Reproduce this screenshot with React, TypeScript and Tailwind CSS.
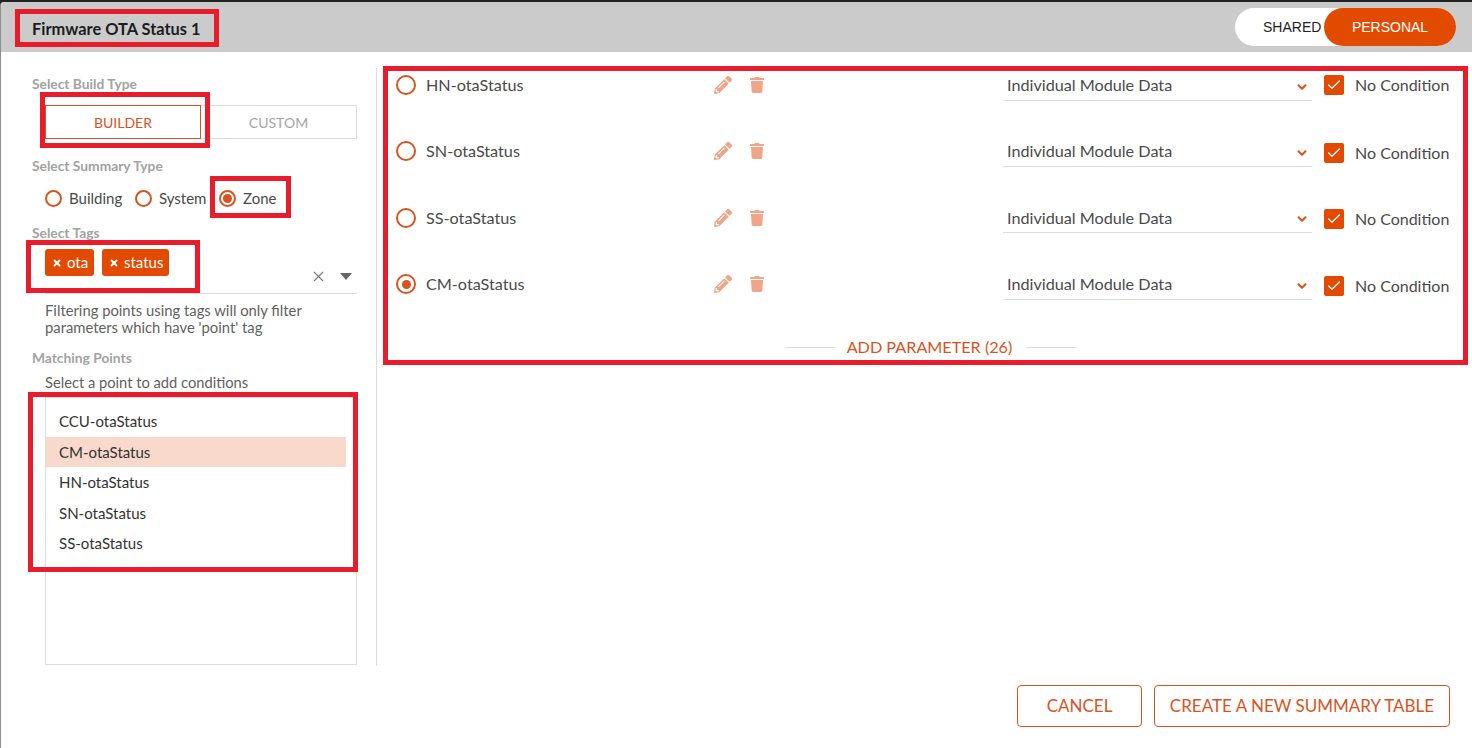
import { FaPencilAlt, FaTrash } from "react-icons/fa";
import { ChevronDown, Check, X } from "lucide-react";

const rows = [
  { name: "HN-otaStatus", checked: false, condClass: "mt-0" },
  { name: "SN-otaStatus", checked: false, condClass: "mt-[4px]" },
  { name: "SS-otaStatus", checked: false, condClass: "mt-[2px]" },
  { name: "CM-otaStatus", checked: true, condClass: "mt-[3px]" },
];

const points = ["CCU-otaStatus", "CM-otaStatus", "HN-otaStatus", "SN-otaStatus", "SS-otaStatus"];

// red annotation boxes that sit over the screenshot
const marks = [
  "left-[15px] top-[9px] w-[204px] h-[38px]",
  "left-[40px] top-[92px] w-[170px] h-[56px]",
  "left-[210px] top-[176px] w-[81px] h-[42px]",
  "left-[26px] top-[240px] w-[174px] h-[53px]",
  "left-[28px] top-[392px] w-[330px] h-[180px]",
  "left-[383px] top-[66px] w-[1085px] h-[299px]",
];

function Radio({ on, size = "md" }: { on: boolean; size?: "sm" | "md" }) {
  const box = size === "md" ? "w-[20px] h-[20px]" : "w-[17px] h-[17px]";
  return (
    <span className={`${box} rounded-full border-2 border-[#d9531e] flex items-center justify-center shrink-0 bg-white`}>
      {on && <span className="w-[9px] h-[9px] rounded-full bg-[#d9531e]" />}
    </span>
  );
}

function Label({ children, className }: { children: string; className: string }) {
  return <div className={`text-[13.8px] leading-[16px] font-bold text-[#a2a2a2] ${className}`}>{children}</div>;
}

export default function App() {
  return (
    <div className="relative w-[1472px] h-[748px] overflow-hidden bg-[#222222] pt-[2px] font-['Lato',sans-serif]">
      <div className="h-[746px] bg-white border-l border-[#8f8f8f] rounded-tl-[4px] overflow-hidden">
        {/* Header */}
        <div className="h-[50px] bg-[#cbcbcb] flex items-center justify-between pl-[31px] pr-[16px]">
          <h1 className="text-[16.4px] font-bold text-[#1c1c1c] mt-[4px]">Firmware OTA Status 1</h1>
          <div className="relative w-[221px] h-[38px] rounded-full bg-white font-['Liberation_Sans',sans-serif] text-[14px]">
            <span className="absolute left-[28px] top-[11px] leading-[17px] text-[#1f1f1f]">SHARED</span>
            <span className="absolute right-0 top-0 w-[132px] h-[38px] rounded-full bg-[#e24a00] text-white flex items-center justify-center">
              PERSONAL
            </span>
          </div>
        </div>

        {/* Body */}
        <div className="flex h-[633px]">
          <div className="w-[375px] pl-[31px] pt-[24px] shrink-0">
            <Label className="">Select Build Type</Label>
            <div className="ml-[13px] mt-[13px] w-[312px] h-[34px] flex border border-[#dddddd] text-[14px]">
              <div className="w-[156px] -ml-px -mt-px h-[34px] border border-[#d9531e] text-[#d9531e] flex items-center justify-center">
                BUILDER
              </div>
              <div className="flex-1 flex items-center justify-center text-[#a5a5a5]">CUSTOM</div>
            </div>

            <Label className="mt-[19px]">Select Summary Type</Label>
            <div className="ml-[13px] mt-[15px] h-[18px] flex items-center text-[15px] text-[#4a4a4a]">
              <Radio on={false} size="sm" />
              <span className="ml-[7px] w-[66px]">Building</span>
              <Radio on={false} size="sm" />
              <span className="ml-[7px] w-[60px]">System</span>
              <Radio on size="sm" />
              <span className="ml-[7px]">Zone</span>
            </div>

            <Label className="mt-[18px]">Select Tags</Label>
            <div className="ml-[13px] mt-[4px] w-[312px] h-[49px] border-b border-[#dddddd] flex items-start relative">
              <div className="flex gap-[8px] mt-[4px]">
                <span className="h-[27px] w-[49px] pl-[7px] rounded-[3px] bg-[#e24a00] text-white text-[15px] flex items-center gap-[5px]">
                  <X size={10} strokeWidth={4.5} />
                  ota
                </span>
                <span className="h-[27px] w-[67px] pl-[7px] rounded-[3px] bg-[#e24a00] text-white text-[15px] flex items-center gap-[5px]">
                  <X size={10} strokeWidth={4.5} />
                  status
                </span>
              </div>
              <X size={17} strokeWidth={1.5} className="absolute left-[265px] top-[23px] text-[#777777]" />
              <span className="absolute left-[295px] top-[28px] w-0 h-0 border-x-[6px] border-x-transparent border-t-[7px] border-t-[#666666]" />
            </div>

            <p className="ml-[13px] mt-[8px] text-[14.8px] leading-[17px] text-[#5f5f5f]">
              Filtering points using tags will only filter
              <br />
              parameters which have 'point' tag
            </p>

            <Label className="mt-[14px]">Matching Points</Label>
            <p className="ml-[13px] mt-[8px] text-[14.7px] leading-[17px] text-[#5f5f5f]">Select a point to add conditions</p>

            <div className="ml-[13px] mt-[6px] w-[312px] h-[268px] border border-[#dddddd] pt-[8px] text-[15px] text-[#333333]">
              {points.map((p) => (
                <div
                  key={p}
                  className={`h-[30.5px] pl-[13px] flex items-center ${p === "CM-otaStatus" ? "bg-[#f8d9cc] mr-[10px]" : ""}`}
                >
                  {p}
                </div>
              ))}
            </div>
          </div>

          <div className="w-px h-[598px] mt-[16px] bg-[#dddddd] shrink-0" />

          <div className="flex-1 pl-[19px]">
            {rows.map((r) => (
              <div key={r.name} className="h-[66.33px] flex items-center">
                <Radio on={r.checked} />
                <span className="ml-[10px] w-[288px] text-[16.2px] text-[#4a4a4a]">{r.name}</span>
                <FaPencilAlt size={18} className="text-[#f0a488] shrink-0" />
                <FaTrash size={16} className="ml-[17px] text-[#f0a488] shrink-0" />
                <div className="ml-[238px] w-[309px] h-[30px] mt-[1px] border-b border-[#dddddd] flex items-center justify-between pl-[4px] pr-[3px] text-[16.2px] text-[#4a4a4a]">
                  Individual Module Data
                  <ChevronDown size={14} strokeWidth={3.5} className="text-[#d9531e] mt-[3px]" />
                </div>
                <div className={`ml-[12px] flex items-center ${r.condClass}`}>
                  <span className="w-[20px] h-[20px] rounded-[2px] bg-[#e24a00] flex items-center justify-center">
                    <Check size={16} strokeWidth={2} className="text-white" />
                  </span>
                  <span className="ml-[11px] text-[16px] text-[#4a4a4a]">No Condition</span>
                </div>
              </div>
            ))}
            <div className="mt-[15px] h-[30px] ml-[389px] w-[291px] flex items-center text-[16.2px] text-[#d9531e]">
              <span className="w-[50px] h-px bg-[#dddddd]" />
              <span className="ml-[12px] mr-[14px] whitespace-nowrap">ADD PARAMETER (26)</span>
              <span className="w-[50px] h-px bg-[#dddddd]" />
            </div>
          </div>
        </div>

        {/* Footer */}
        <div className="flex justify-end gap-[12px] pr-[22px]">
          <button className="w-[125px] h-[42px] rounded-[4px] border border-[#d9531e] text-[17px] text-[#d9531e] bg-white">
            CANCEL
          </button>
          <button className="w-[296px] h-[42px] rounded-[4px] border border-[#d9531e] text-[17px] text-[#d9531e] bg-white">
            CREATE A NEW SUMMARY TABLE
          </button>
        </div>
      </div>

      {marks.map((m) => (
        <div key={m} className={`absolute ${m} border-[5px] border-[#e81c2a] pointer-events-none`} />
      ))}
    </div>
  );
}
